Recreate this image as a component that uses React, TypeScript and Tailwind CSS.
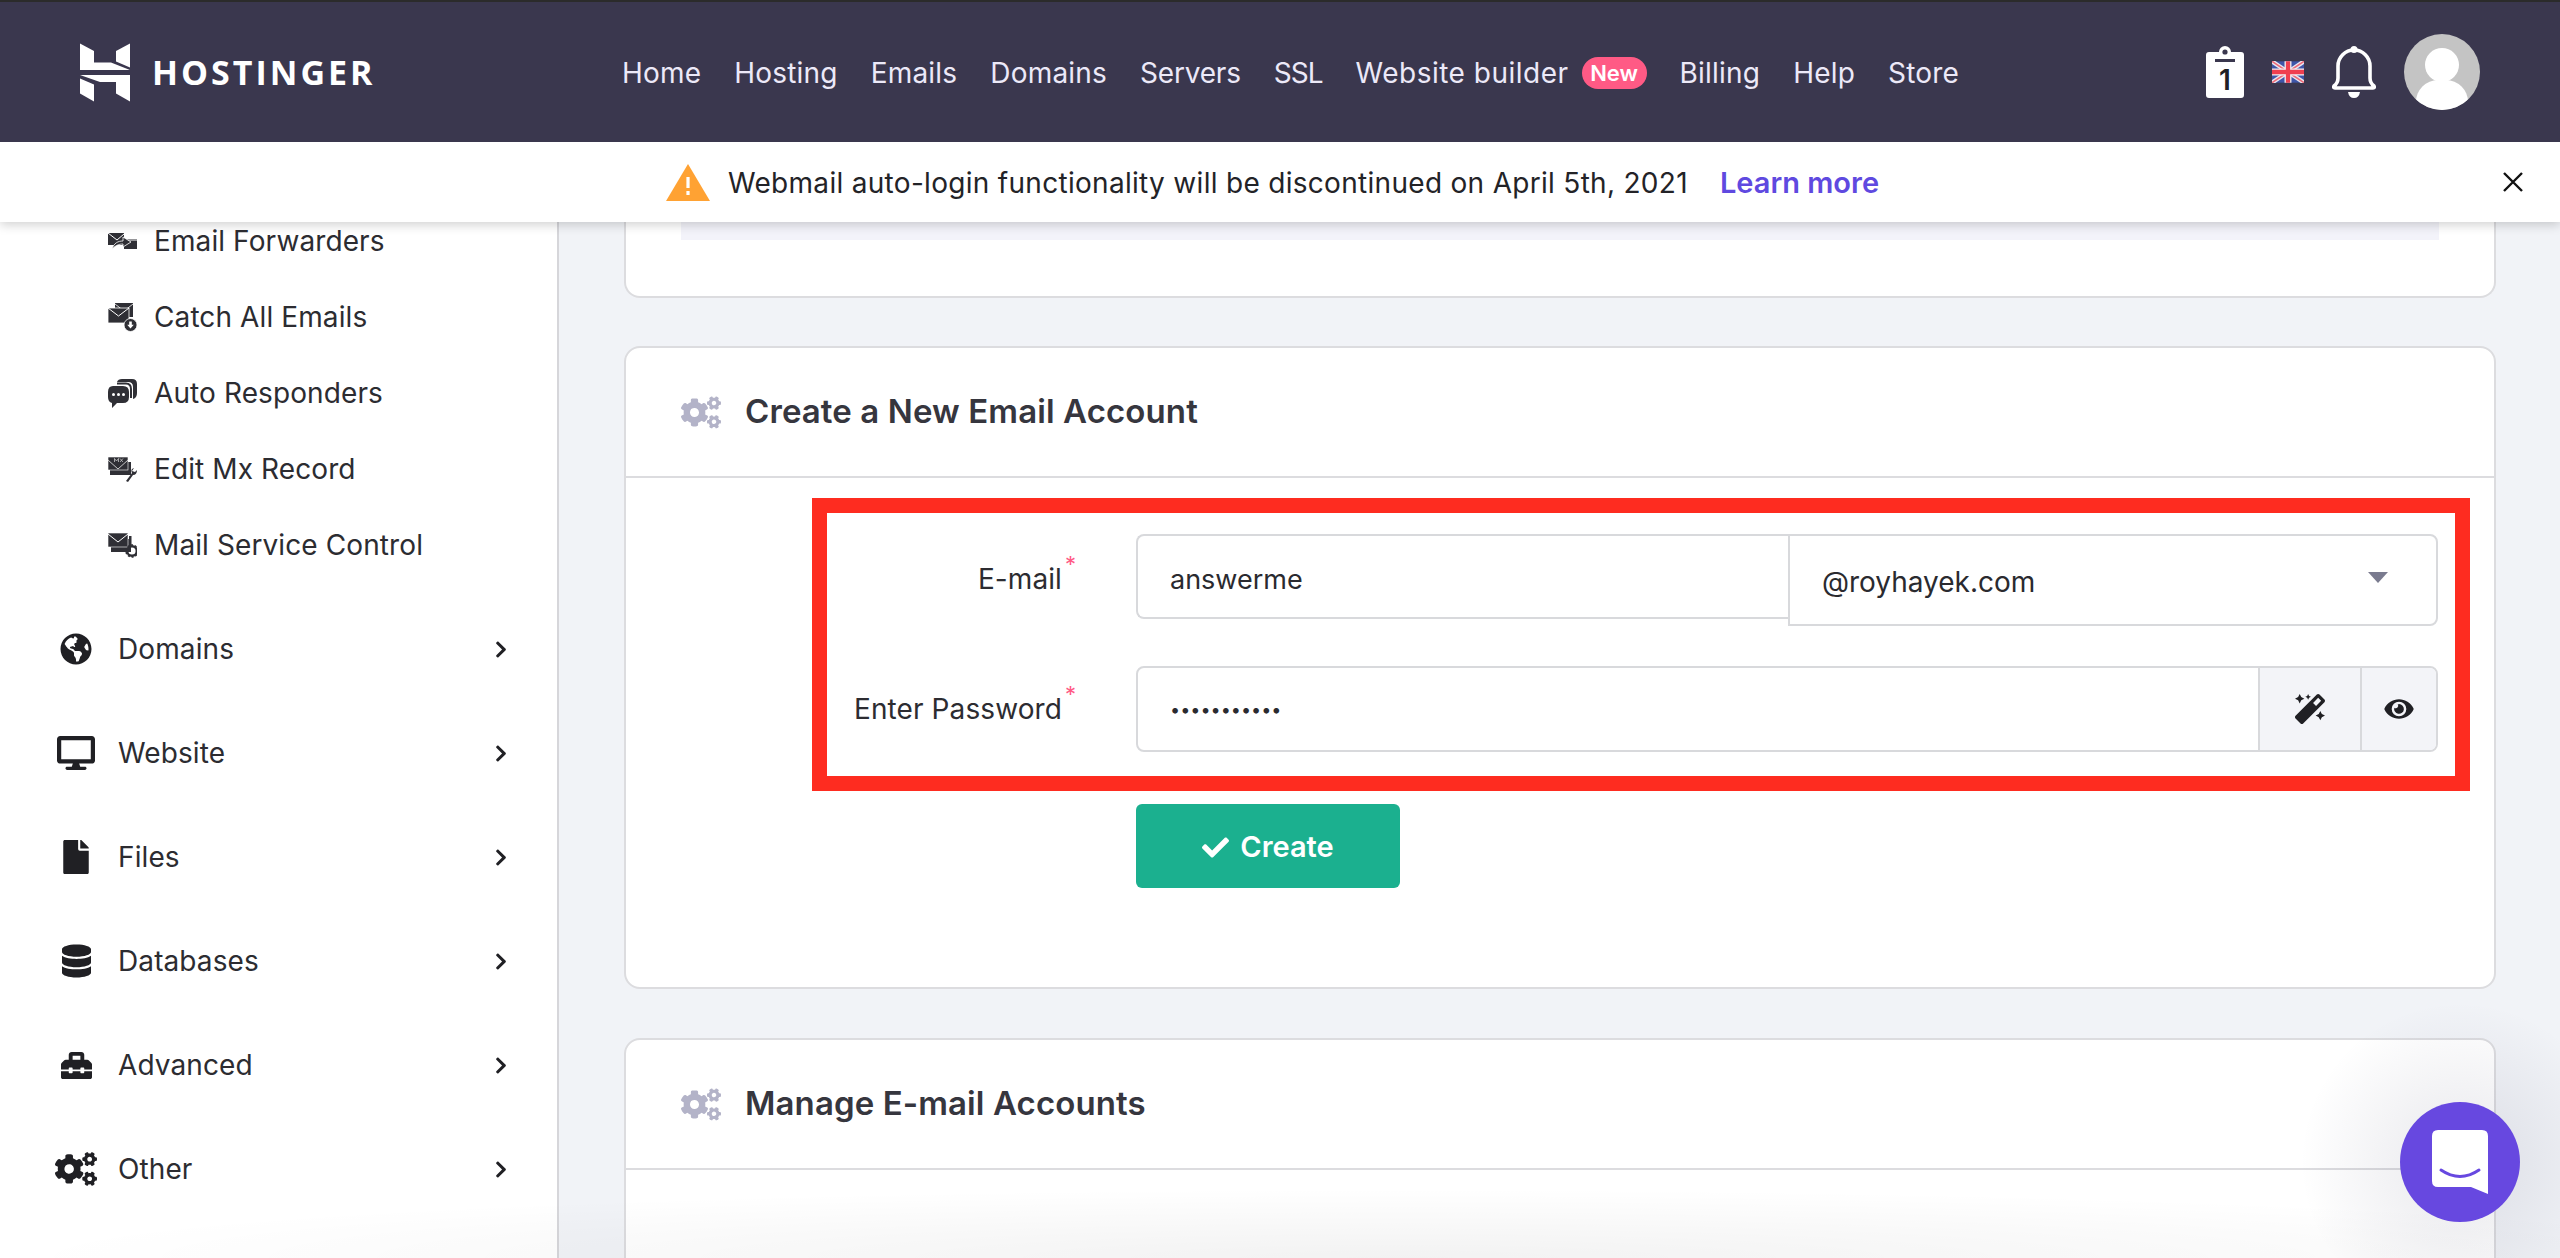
import React from 'react';
import { FaGlobeAmericas, FaDesktop, FaFile, FaDatabase, FaToolbox, FaCogs, FaChevronRight, FaCheck, FaEye, FaMagic } from 'react-icons/fa';

const NAV = [
  { label: 'Home', cls: '' },
  { label: 'Hosting', cls: '' },
  { label: 'Emails', cls: '' },
  { label: 'Domains', cls: '' },
  { label: 'Servers', cls: 'tracking-[-0.2px]' },
  { label: 'SSL', cls: 'tracking-[-1px]' },
  { label: 'Website builder', cls: 'tracking-[0.5px]' },
  { label: 'Billing', cls: '' },
  { label: 'Help', cls: '' },
  { label: 'Store', cls: '' },
];

const Logo = () => (
  <svg viewBox="0 0 50 58" className="w-[50px] h-[59px]" fill="#fff">
    <polygon points="0,0 14,7.5 14,19 31,19 50,26.5 0,26.5" />
    <polygon points="36,7.5 50,0 50,24 36,18" />
    <polygon points="0,31.5 50,31.5 50,38.5 20,38.5" />
    <polygon points="0,35 14,41 14,58 0,50" />
    <polygon points="36,38.5 50,38.5 50,58 36,50" />
  </svg>
);

const ForwardIcon = () => (
  <svg viewBox="0 0 29 20" className="w-[29px] h-[20px]">
    <rect x="0" y="2" width="16" height="12" fill="#2f2f35" />
    <rect x="16" y="8" width="13" height="10" fill="#2f2f35" />
    <path d="M0 2 L9 9 L16 3 M16 9 L29 9" fill="none" stroke="#fff" strokeWidth="1" />
    <path d="M4 18 C6 12 10 10 15 10 L15 6 L23 11 L15 16 L15 13 C11 13 8 14 4 18Z" fill="#2f2f35" stroke="#fff" strokeWidth="0.8" />
  </svg>
);

const CatchIcon = () => (
  <svg viewBox="0 0 29 29" className="w-[29px] h-[29px]">
    <rect x="7" y="0" width="18" height="14" fill="#2f2f35" />
    <path d="M7 1 L16 8 L25 1" fill="none" stroke="#fff" strokeWidth="0.8" />
    <rect x="0" y="5" width="21" height="15" fill="#2f2f35" stroke="#fff" strokeWidth="0.8" />
    <path d="M0 5 L10.5 13 L21 5" fill="none" stroke="#fff" strokeWidth="1" />
    <circle cx="22.5" cy="22" r="6.5" fill="#2f2f35" stroke="#fff" strokeWidth="0.8" />
    <path d="M21.2 18.5 h2.6 v3.2 h2 l-3.3 3.8 -3.3 -3.8 h2z" fill="#fff" />
  </svg>
);

const ResponderIcon = () => (
  <svg viewBox="0 0 29 29" className="w-[29px] h-[29px]">
    <path d="M14 0 H24 Q29 0 29 5 V14 Q29 19 25 20 V8 Q25 3 20 3 H9 Q10 0 14 0Z" fill="#2f2f35" />
    <path d="M5 7 H15 Q21 7 21 13 V18 Q21 24 15 24 H9 L4 29 V24 Q0 23 0 18 V13 Q0 7 5 7Z" fill="#2f2f35" />
    <path d="M9 4.5 H18 Q23 4.5 23 10 V19" fill="none" stroke="#2f2f35" strokeWidth="2" />
    <circle cx="5.5" cy="15.5" r="1.5" fill="#fff" />
    <circle cx="10.5" cy="15.5" r="1.5" fill="#fff" />
    <circle cx="15.5" cy="15.5" r="1.5" fill="#fff" />
  </svg>
);

const MxIcon = () => (
  <svg viewBox="0 0 29 25" className="w-[29px] h-[25px]">
    <rect x="2" y="5" width="21" height="13" fill="#2f2f35" />
    <rect x="0" y="0" width="20" height="13" fill="#2f2f35" stroke="#fff" strokeWidth="0.6" />
    <path d="M0 3 L10 12 L20 3" fill="none" stroke="#d8d8d8" strokeWidth="0.9" />
    <path d="M6.5 5 V1.5 L8.5 4 L10.5 1.5 V5 M12 1.5 L15 5 M15 1.5 L12 5" fill="none" stroke="#d8d8d8" strokeWidth="0.7" />
    <path d="M18 24 L24 16 Q22 12 26 11 L24 14 L27 15 L29 13 Q29 18 25 18 L20 25Z" fill="#2f2f35" />
  </svg>
);

const ControlIcon = () => (
  <svg viewBox="0 0 29 25" className="w-[29px] h-[25px]">
    <rect x="3" y="6" width="20" height="13" fill="#2f2f35" />
    <rect x="0" y="0" width="20" height="14" fill="#2f2f35" stroke="#fff" strokeWidth="0.6" />
    <path d="M0 1 L10 9 L20 1" fill="none" stroke="#fff" strokeWidth="1" />
    <circle cx="24" cy="18" r="4.8" fill="none" stroke="#2f2f35" strokeWidth="2.4" />
    <circle cx="24" cy="18" r="6" fill="none" stroke="#2f2f35" strokeWidth="1.6" strokeDasharray="2 1.8" />
    <rect x="21" y="3" width="2.5" height="9" fill="#2f2f35" />
  </svg>
);

const SUB_ITEMS = [
  { label: 'Email Forwarders', icon: <ForwardIcon /> },
  { label: 'Catch All Emails', icon: <CatchIcon /> },
  { label: 'Auto Responders', icon: <ResponderIcon /> },
  { label: 'Edit Mx Record', icon: <MxIcon /> },
  { label: 'Mail Service Control', icon: <ControlIcon /> },
];

const MAIN_ITEMS = [
  { label: 'Domains', icon: <FaGlobeAmericas className="w-[32px] h-[32px]" /> },
  { label: 'Website', icon: <FaDesktop className="w-[38px] h-[34px]" /> },
  { label: 'Files', icon: <FaFile className="w-[26px] h-[34px]" /> },
  { label: 'Databases', icon: <FaDatabase className="w-[29px] h-[34px]" /> },
  { label: 'Advanced', icon: <FaToolbox className="w-[33px] h-[31px]" /> },
  { label: 'Other', icon: <FaCogs className="w-[42px] h-[34px]" /> },
];

const Sidebar = () => (
  <aside className="w-[559px] shrink-0 bg-white border-r-2 border-[#d6d6da] text-[28px] tracking-[0.1px] text-[#2c2c31]">
    <div className="-mt-[19px]">
      {SUB_ITEMS.map((item) => (
        <div key={item.label} className="h-[76px] pl-[108px] flex items-center gap-[17px]">
          <span className="w-[29px] flex justify-center">{item.icon}</span>
          <span>{item.label}</span>
        </div>
      ))}
    </div>
    <div className="mt-[14px]">
      {MAIN_ITEMS.map((item) => (
        <div key={item.label} className="h-[104px] pl-[54px] pr-[49px] flex items-center">
          <span className="w-[44px] mr-[20px] flex justify-center text-[#202024]">{item.icon}</span>
          <span>{item.label}</span>
          <FaChevronRight className="ml-auto w-[14px] h-[19px] text-[#202024]" />
        </div>
      ))}
    </div>
  </aside>
);

const Header = () => (
  <header className="h-[142px] border-t-2 border-[#2b2b2b] bg-[#3a374e] flex items-center relative z-20 pl-[80px] pr-[80px]">
    <Logo />
    <span className="ml-[22px] w-[223px] whitespace-nowrap font-['Open_Sans'] font-bold text-[34px] leading-none tracking-[3px] text-white">HOSTINGER</span>
    <nav className="ml-[247px] pt-[2px] flex items-center gap-[33px] text-[28px] tracking-[0.2px] text-[#ece9f8]">
      {NAV.map((item) => (
        <span key={item.label} className={`flex items-center ${item.cls}`}>
          {item.label}
          {item.label === 'Website builder' && (
            <span className="ml-[13px] h-[32px] w-[65px] rounded-full bg-[#ff5a85] text-white text-[22px] tracking-normal font-semibold flex items-center justify-center">New</span>
          )}
        </span>
      ))}
    </nav>
    <div className="ml-auto flex items-center">
      <div className="relative w-[38px] h-[52px] mr-[28px]">
        <svg viewBox="0 0 38 52" className="w-[38px] h-[52px]">
          <path d="M3 6 H13 A6 6 0 0 1 25 6 H35 Q38 6 38 9 V49 Q38 52 35 52 H3 Q0 52 0 49 V9 Q0 6 3 6Z" fill="#fff" />
          <circle cx="19" cy="6" r="2.6" fill="#3a374e" />
          <rect x="9" y="13" width="20" height="3" fill="#3a374e" />
        </svg>
        <span className="absolute inset-x-0 top-[18px] text-center text-[28px] leading-[32px] font-semibold text-[#202024]">1</span>
      </div>
      <svg viewBox="0 0 60 40" className="w-[32px] h-[22px] mr-[28px]">
        <rect width="60" height="40" fill="#3f55a8" />
        <path d="M0 0 L60 40 M60 0 L0 40" stroke="#e8e8f0" strokeWidth="8" />
        <path d="M0 0 L60 40 M60 0 L0 40" stroke="#ee6a78" strokeWidth="3" />
        <path d="M30 0 V40 M0 20 H60" stroke="#f0f0f4" strokeWidth="13" />
        <path d="M30 0 V40 M0 20 H60" stroke="#ef3f50" strokeWidth="8" />
      </svg>
      <svg viewBox="0 0 44 52" className="w-[44px] h-[52px] mr-[28px]">
        <circle cx="22" cy="3.5" r="3.5" fill="#fff" />
        <path d="M6 32 V20 A16 16 0 0 1 38 20 V32 Q38 37 42 40 Q43 42 41 42 H3 Q1 42 2 40 Q6 37 6 32Z" fill="none" stroke="#fff" strokeWidth="3.6" strokeLinejoin="round" />
        <path d="M16 46 H28 Q27 52 22 52 Q17 52 16 46Z" fill="#fff" />
      </svg>
      <div className="w-[76px] h-[76px] rounded-full bg-[#c4c4c4] overflow-hidden relative">
        <div className="absolute left-[21px] top-[14px] w-[34px] h-[34px] rounded-full bg-white" />
        <div className="absolute left-[12px] top-[46px] w-[52px] h-[44px] rounded-full bg-white" />
      </div>
    </div>
  </header>
);

const Notice = () => (
  <div className="h-[80px] relative z-10 bg-white shadow-[0_3px_10px_rgba(0,0,0,0.18)] pl-[666px] pr-[37px] flex items-center text-[28px] text-[#232327]">
    <svg viewBox="0 0 44 37" className="w-[44px] h-[37px] mr-[18px]">
      <path d="M22 0 L44 37 H0Z" fill="#ffa233" />
      <rect x="20.4" y="13" width="3.2" height="11" fill="#fff" />
      <rect x="20.4" y="27" width="3.2" height="4" fill="#fff" />
    </svg>
    <span className="pt-[2px] tracking-[0.3px]">Webmail auto-login functionality will be discontinued on April 5th, 2021</span>
    <span className="ml-[32px] pt-[2px] text-[29px] font-semibold text-[#5f49e0]">Learn more</span>
    <svg viewBox="0 0 20 20" className="ml-auto w-[20px] h-[20px]">
      <path d="M1 1 L19 19 M19 1 L1 19" stroke="#111" strokeWidth="2.4" />
    </svg>
  </div>
);

const CardHeader = ({ title }: { title: string }) => (
  <div className="h-[130px] border-b-2 border-[#dcdcdf] pl-[55px] flex items-center">
    <FaCogs className="w-[40px] h-[33px] text-[#b3b3c8]" />
    <h2 className="ml-[24px] text-[33px] tracking-[0.1px] font-semibold text-[#36363e]">{title}</h2>
  </div>
);

const FieldLabel = ({ text }: { text: string }) => (
  <div className="w-[510px] pr-[74px] text-right text-[28px] tracking-[0.1px] text-[#2c2c31] relative">
    {text}
    <span className="absolute right-[60px] -top-[10px] text-[22px] text-[#ff5a85]">*</span>
  </div>
);

const CreateForm = () => (
  <div className="relative pt-[56px] pb-[99px]">
    <div className="flex items-start">
      <div className="pt-[24px]"><FieldLabel text="E-mail" /></div>
      <div className="w-[652px] h-[85px] border-2 border-r-0 border-[#d8d9dc] rounded-l-[8px] pl-[32px] pt-[7px] flex items-center text-[27px] text-[#2a2a2f]">answerme</div>
      <div className="w-[650px] h-[92px] border-2 border-[#d8d9dc] rounded-r-[8px] pl-[32px] pr-[48px] flex items-center justify-between text-[28px] text-[#2a2a2f]">
        <span className="pt-[3px]">@royhayek.com</span>
        <svg viewBox="0 0 20 11" className="w-[20px] h-[11px] -mt-[6px]"><path d="M0 0 H20 L10 11Z" fill="#7a7b8f" /></svg>
      </div>
    </div>
    <div className="mt-[40px] flex items-start">
      <div className="pt-[22px]"><FieldLabel text="Enter Password" /></div>
      <div className="w-[1302px] h-[86px] border-2 border-[#d8d9dc] rounded-[8px] flex items-stretch overflow-hidden">
        <div className="flex-1 pl-[32px] flex items-center text-[18px] text-[#2a2a2f]">•••••••••••</div>
        <div className="w-[102px] border-l-2 border-[#d8d9dc] bg-[#f3f4f8] flex items-center justify-center">
          <FaMagic className="w-[30px] h-[30px] text-[#202024]" />
        </div>
        <div className="w-[76px] border-l-2 border-[#d8d9dc] bg-[#f3f4f8] flex items-center justify-center">
          <FaEye className="w-[32px] h-[26px] text-[#202024]" />
        </div>
      </div>
    </div>
    <div className="mt-[52px] ml-[510px] w-[264px] h-[84px] rounded-[6px] bg-[#1bb08f] text-white pt-[2px] flex items-center justify-center gap-[11px] text-[29px] font-semibold">
      <FaCheck className="w-[27px] h-[27px]" />
      Create
    </div>
    {/* red annotation drawn over the screenshot */}
    <div className="absolute left-[186px] top-[20px] w-[1658px] h-[293px] border-[15px] border-[#fe2c20] pointer-events-none" />
  </div>
);

export default function App() {
  return (
    <div className="relative h-[1258px] w-[2560px] overflow-hidden bg-[#f1f3f7] font-['Inter',sans-serif]">
      <Header />
      <Notice />
      <div className="flex h-[1036px]">
        <Sidebar />
        <main className="flex-1 pl-[65px] pr-[64px]">
          <div className="h-[76px] bg-white border-2 border-t-0 border-[#dcdcdf] rounded-b-[16px] px-[55px]">
            <div className="h-[18px] bg-[#f3f3fa]" />
          </div>
          <section className="mt-[48px] bg-white border-2 border-[#dcdcdf] rounded-[16px]">
            <CardHeader title="Create a New Email Account" />
            <CreateForm />
          </section>
          <section className="mt-[49px] h-[400px] bg-white border-2 border-[#dcdcdf] rounded-[16px]">
            <CardHeader title="Manage E-mail Accounts" />
          </section>
        </main>
      </div>
      {/* chat launcher and its soft page shadow */}
      <div className="absolute inset-x-0 bottom-0 h-[80px] bg-[radial-gradient(ellipse_1400px_70px_at_1400px_100%,rgba(0,0,0,0.05),transparent)] pointer-events-none" />
      <div className="absolute left-[2300px] top-[1002px] w-[320px] h-[320px] bg-[radial-gradient(closest-side,rgba(30,30,70,0.1),transparent)] pointer-events-none" />
      <div className="absolute left-[2400px] top-[1102px] w-[120px] h-[120px] rounded-full bg-[#6748e0] flex items-center justify-center">
        <svg viewBox="0 0 56 64" className="w-[56px] h-[64px]">
          <path d="M6 0 H50 Q56 0 56 6 V64 L39 57 H6 Q0 57 0 51 V6 Q0 0 6 0Z" fill="#fff" />
          <path d="M9 40 Q28 53 47 40" fill="none" stroke="#6748e0" strokeWidth="3" strokeLinecap="round" />
        </svg>
      </div>
    </div>
  );
}
